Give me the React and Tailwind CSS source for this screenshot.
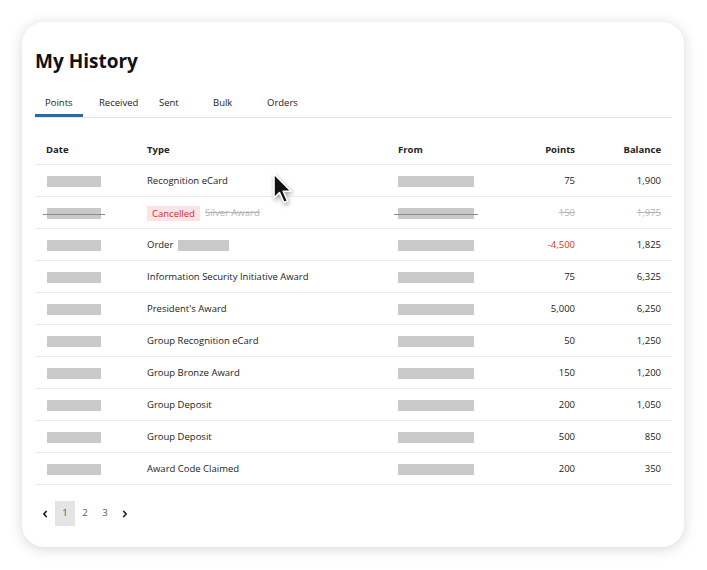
import React from 'react';

const rows = [
  { type: 'Recognition eCard', points: '75', balance: '1,900' },
  { type: 'Silver Award', points: '150', balance: '1,975', cancelled: true },
  { type: 'Order', points: '-4,500', balance: '1,825', order: true },
  { type: 'Information Security Initiative Award', points: '75', balance: '6,325' },
  { type: "President's Award", points: '5,000', balance: '6,250' },
  { type: 'Group Recognition eCard', points: '50', balance: '1,250' },
  { type: 'Group Bronze Award', points: '150', balance: '1,200' },
  { type: 'Group Deposit', points: '200', balance: '1,050' },
  { type: 'Group Deposit', points: '500', balance: '850' },
  { type: 'Award Code Claimed', points: '200', balance: '350' },
];

const tabs = [
  { label: 'Points', w: 'w-[54px]' },
  { label: 'Received', w: 'w-[60px]' },
  { label: 'Sent', w: 'w-[54px]' },
  { label: 'Bulk', w: 'w-[54px]' },
  { label: 'Orders', w: 'w-[54px]' },
];

const Bar = ({ w, struck }) => (
  <span className="relative inline-flex items-center">
    <span className={`${w} h-[11px] bg-[#c9c9c9] block`} />
    {struck && <span className="absolute left-[-4px] right-[-4px] top-1/2 h-px bg-[#8a8a8a]" />}
  </span>
);

const Chevron = ({ dir }) => (
  <svg width="8" height="8" viewBox="0 0 8 8" fill="none" stroke="#222" strokeWidth="1.8" strokeLinecap="round" strokeLinejoin="round">
    {dir === 'left' ? <path d="M5.2 1.5 L2.8 4 L5.2 6.5" /> : <path d="M2.8 1.5 L5.2 4 L2.8 6.5" />}
  </svg>
);

const Cursor = () => (
  <svg className="absolute left-[272px] top-[172px]" width="24" height="36" viewBox="0 0 24 36" style={{ filter: 'drop-shadow(1px 2px 2px rgba(0,0,0,0.35))' }}>
    <path d="M2 2 L2 26 L7.5 20.5 L12 30.5 L15.5 29 L11.2 19.2 L19 19.2 Z" fill="#111" stroke="#fff" strokeWidth="1.6" strokeLinejoin="round" />
  </svg>
);

export default function App() {
  return (
    <div className="w-[707px] h-[570px] bg-white p-[22px] relative" style={{ fontFamily: '"Open Sans", "Liberation Sans", sans-serif' }}>
      <div className="w-[662px] h-[525px] bg-white rounded-[22px] shadow-[0_2px_14px_rgba(0,0,0,0.16)] pl-[13px] pr-[12px] pt-[25px] text-[#222]">
        <h1 className="text-[19px] font-bold leading-[28px] text-[#111]">My History</h1>

        {/* tabs */}
        <div className="mt-[15px] flex border-b border-[#e4e4e4] h-[28px]">
          {tabs.map((t, i) => (
            <div key={t.label} className={`${t.w} flex items-start`}>
              <span className={`px-[10px] text-[9.5px] leading-[25px] h-[27px] ${i === 0 ? 'border-b-[3px] border-[#1f6ea6]' : ''}`}>
                {t.label}
              </span>
            </div>
          ))}
        </div>

        {/* table */}
        <div className="text-[9.5px]">
          <div className="flex items-end h-[47px] pb-[7px] border-b border-[#ececec] font-bold">
            <div className="w-[101px] pl-[11px]">Date</div>
            <div className="w-[251px] pl-[11px]">Type</div>
            <div className="w-[113px] pl-[11px]">From</div>
            <div className="w-[86px] pr-[11px] text-right">Points</div>
            <div className="w-[86px] pr-[11px] text-right">Balance</div>
          </div>
          {rows.map((r, i) => (
            <div key={i} className="flex items-center h-[32px] pt-[2px] border-b border-[#ececec]">
              <div className="w-[101px] pl-[12px] flex items-center">
                <Bar w="w-[54px]" struck={r.cancelled} />
              </div>
              <div className="w-[251px] pl-[11px] flex items-center gap-[5px]">
                {r.cancelled ? (
                  <>
                    <span className="bg-[#fde3e3] text-[#cf2f2f] px-[5px] leading-[15px]">Cancelled</span>
                    <span className="text-[#b5b5b5] line-through">{r.type}</span>
                  </>
                ) : r.order ? (
                  <>
                    <span>{r.type}</span>
                    <Bar w="w-[51px]" />
                  </>
                ) : (
                  <span>{r.type}</span>
                )}
              </div>
              <div className="w-[113px] pl-[11px] flex items-center">
                <Bar w="w-[76px]" struck={r.cancelled} />
              </div>
              <div className={`w-[86px] pr-[11px] text-right ${r.cancelled ? 'text-[#b5b5b5] line-through' : r.points.startsWith('-') ? 'text-[#d0342c]' : ''}`}>
                {r.points}
              </div>
              <div className={`w-[86px] pr-[11px] text-right ${r.cancelled ? 'text-[#b5b5b5] line-through' : ''}`}>
                {r.balance}
              </div>
            </div>
          ))}
        </div>

        {/* pagination */}
        <div className="flex mt-[16px] text-[9.5px] text-[#555]">
          <div className="w-[20px] h-[25px] flex items-center justify-center"><Chevron dir="left" /></div>
          <div className="w-[20px] h-[25px] flex items-center justify-center bg-[#e4e4e4]">1</div>
          <div className="w-[20px] h-[25px] flex items-center justify-center">2</div>
          <div className="w-[20px] h-[25px] flex items-center justify-center">3</div>
          <div className="w-[20px] h-[25px] flex items-center justify-center"><Chevron dir="right" /></div>
        </div>
      </div>
      <Cursor />
    </div>
  );
}
